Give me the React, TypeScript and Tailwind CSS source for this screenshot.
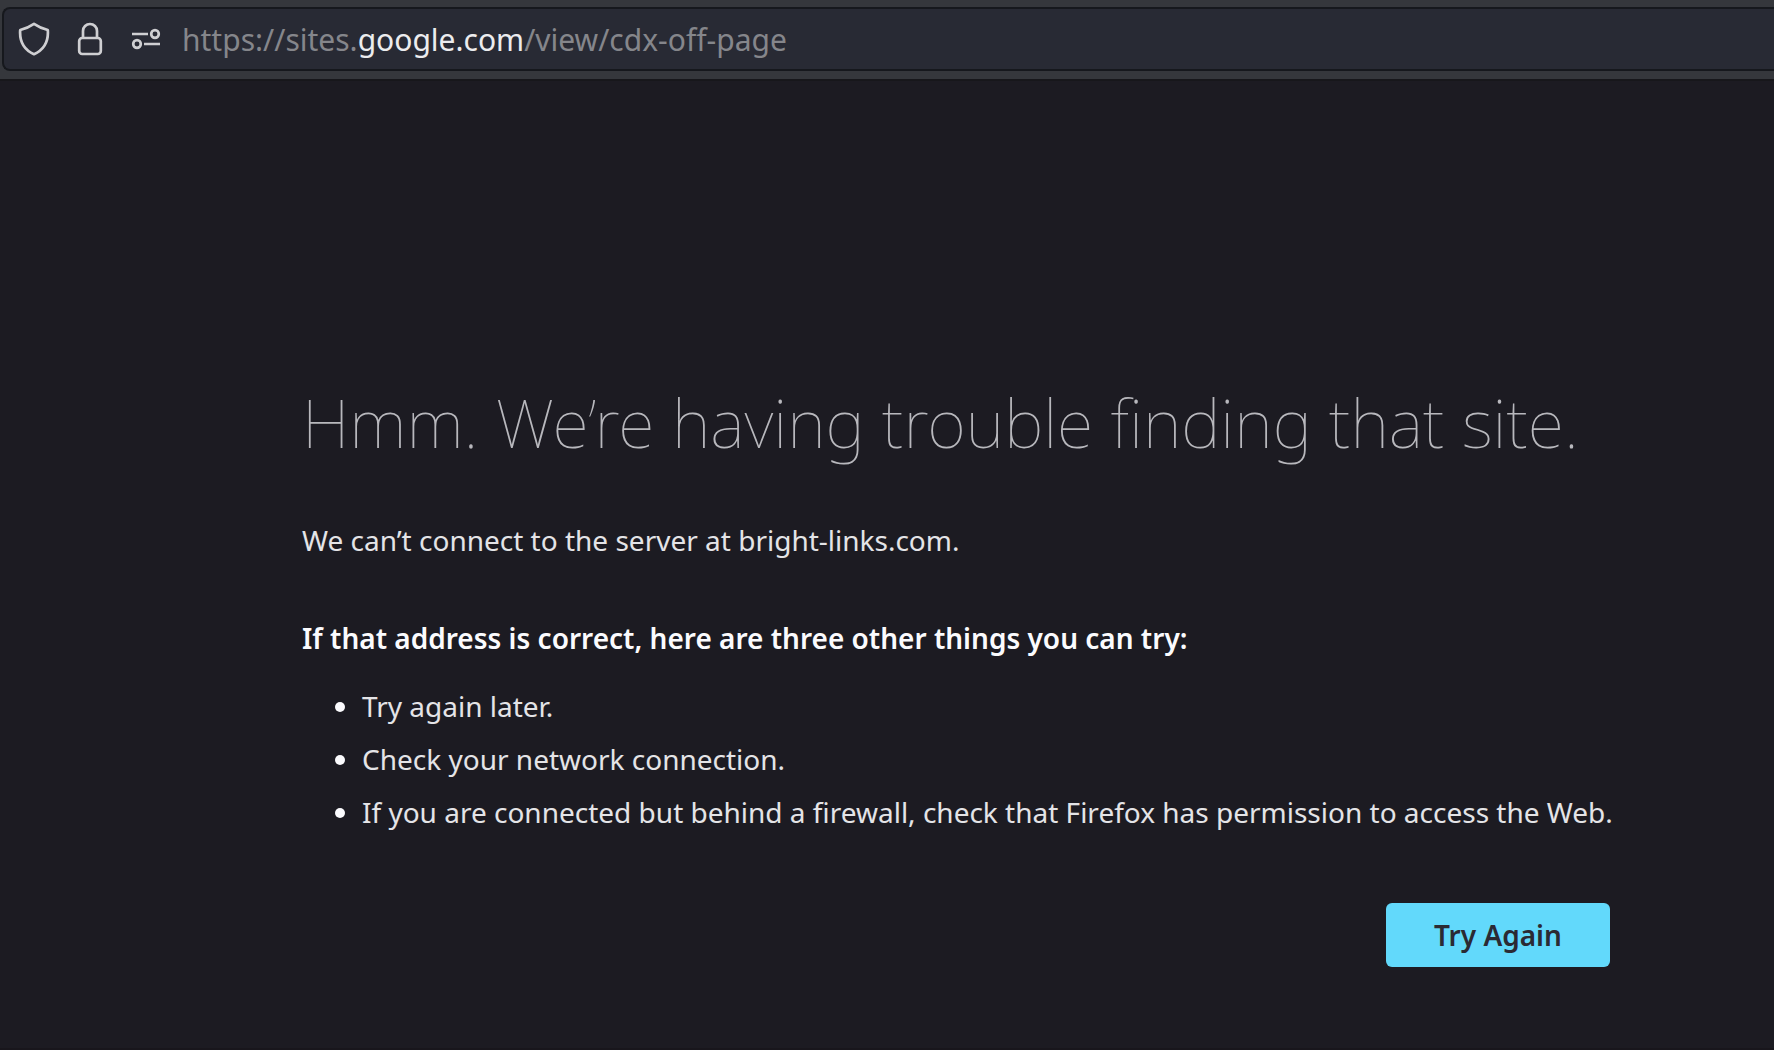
import React from 'react';

const suggestions: string[] = [
  "Try again later.",
  "Check your network connection.",
  "If you are connected but behind a firewall, check that Firefox has permission to access the Web.",
];

const ShieldIcon: React.FC = () => (
  <svg width="32" height="34" viewBox="0 0 32 34" fill="none" stroke="currentColor" strokeWidth="2.7" strokeLinejoin="round">
    <path d="M16 1.8 Q22.5 6.2 29.8 8 C30.6 18.5 26.5 27.5 16 32.2 C5.5 27.5 1.4 18.5 2.2 8 Q9.5 6.2 16 1.8Z" />
  </svg>
);

const LockIcon: React.FC = () => (
  <svg width="26" height="34" viewBox="0 0 26 34" fill="none" stroke="currentColor" strokeWidth="2.7">
    <rect x="2.2" y="16" width="21.6" height="16" rx="3" />
    <path d="M6 16V9a7 7 0 0 1 14 0v7" />
  </svg>
);

const PermissionsIcon: React.FC = () => (
  <svg width="30" height="22" viewBox="0 0 30 22" fill="none" stroke="currentColor" strokeWidth="2.7">
    <path d="M1 6h16M13 16h16" />
    <circle cx="24" cy="6" r="3.8" />
    <circle cx="6" cy="16" r="3.8" />
  </svg>
);

const AddressBar: React.FC = () => (
  <header className="bg-[#35373c] border-b-2 border-[#17171b] pt-[7px] pb-2 pl-[2px]">
    <div className="flex items-center h-16 pl-3.5 bg-[#282a34] border-2 border-r-0 border-[#16181d] rounded-l-lg text-[#cfcfd2]">
      <button type="button" aria-label="Tracking protection" className="flex justify-center w-8">
        <ShieldIcon />
      </button>
      <button type="button" aria-label="Connection security" className="flex justify-center w-8 ml-6">
        <LockIcon />
      </button>
      <button type="button" aria-label="Permissions" className="flex justify-center w-8 ml-6">
        <PermissionsIcon />
      </button>
      <div
        role="textbox"
        aria-label="Address"
        contentEditable
        suppressContentEditableWarning
        spellCheck={false}
        className="flex-1 ml-5 pt-0.5 text-[30px] leading-10 whitespace-nowrap text-[#85868b] outline-none"
      >
        https://sites.<span className="text-[#ececee]">google.com</span>/view/cdx-off-page
      </div>
    </div>
  </header>
);

const App: React.FC = () => {
  return (
    <div className="flex flex-col min-h-screen bg-[#1c1b22] text-[#e4e4e7] font-['Noto_Sans',sans-serif]">
      <AddressBar />

      <main className="flex-1 pl-[302px] pr-[164px] pt-[296px] pb-20 border-b-2 border-[#18161c]">
        <h1 className="text-[67px] leading-[90px] font-thin whitespace-nowrap text-[#b8b8bd]">
          Hmm. We’re having trouble finding that site.
        </h1>
        <p className="mt-[53px] text-[28px] leading-10">
          We can’t connect to the server at bright-links.com.
        </p>
        <p className="mt-[58px] text-[28px] leading-10 font-semibold text-[#fbfbfe]">
          If that address is correct, here are three other things you can try:
        </p>
        <ul className="mt-7 pl-[60px] list-disc text-[28px] leading-10 whitespace-nowrap marker:text-[#fbfbfe]">
          {suggestions.map((text) => (
            <li key={text} className="mb-[13px]">{text}</li>
          ))}
        </ul>
        <div className="flex justify-end mt-[71px]">
          <button type="button" className="w-56 h-16 rounded-md bg-[#62d9fb] text-[28px] leading-10 font-semibold text-[#2b2a33]">
            Try Again
          </button>
        </div>
      </main>
    </div>
  );
};

export default App;
